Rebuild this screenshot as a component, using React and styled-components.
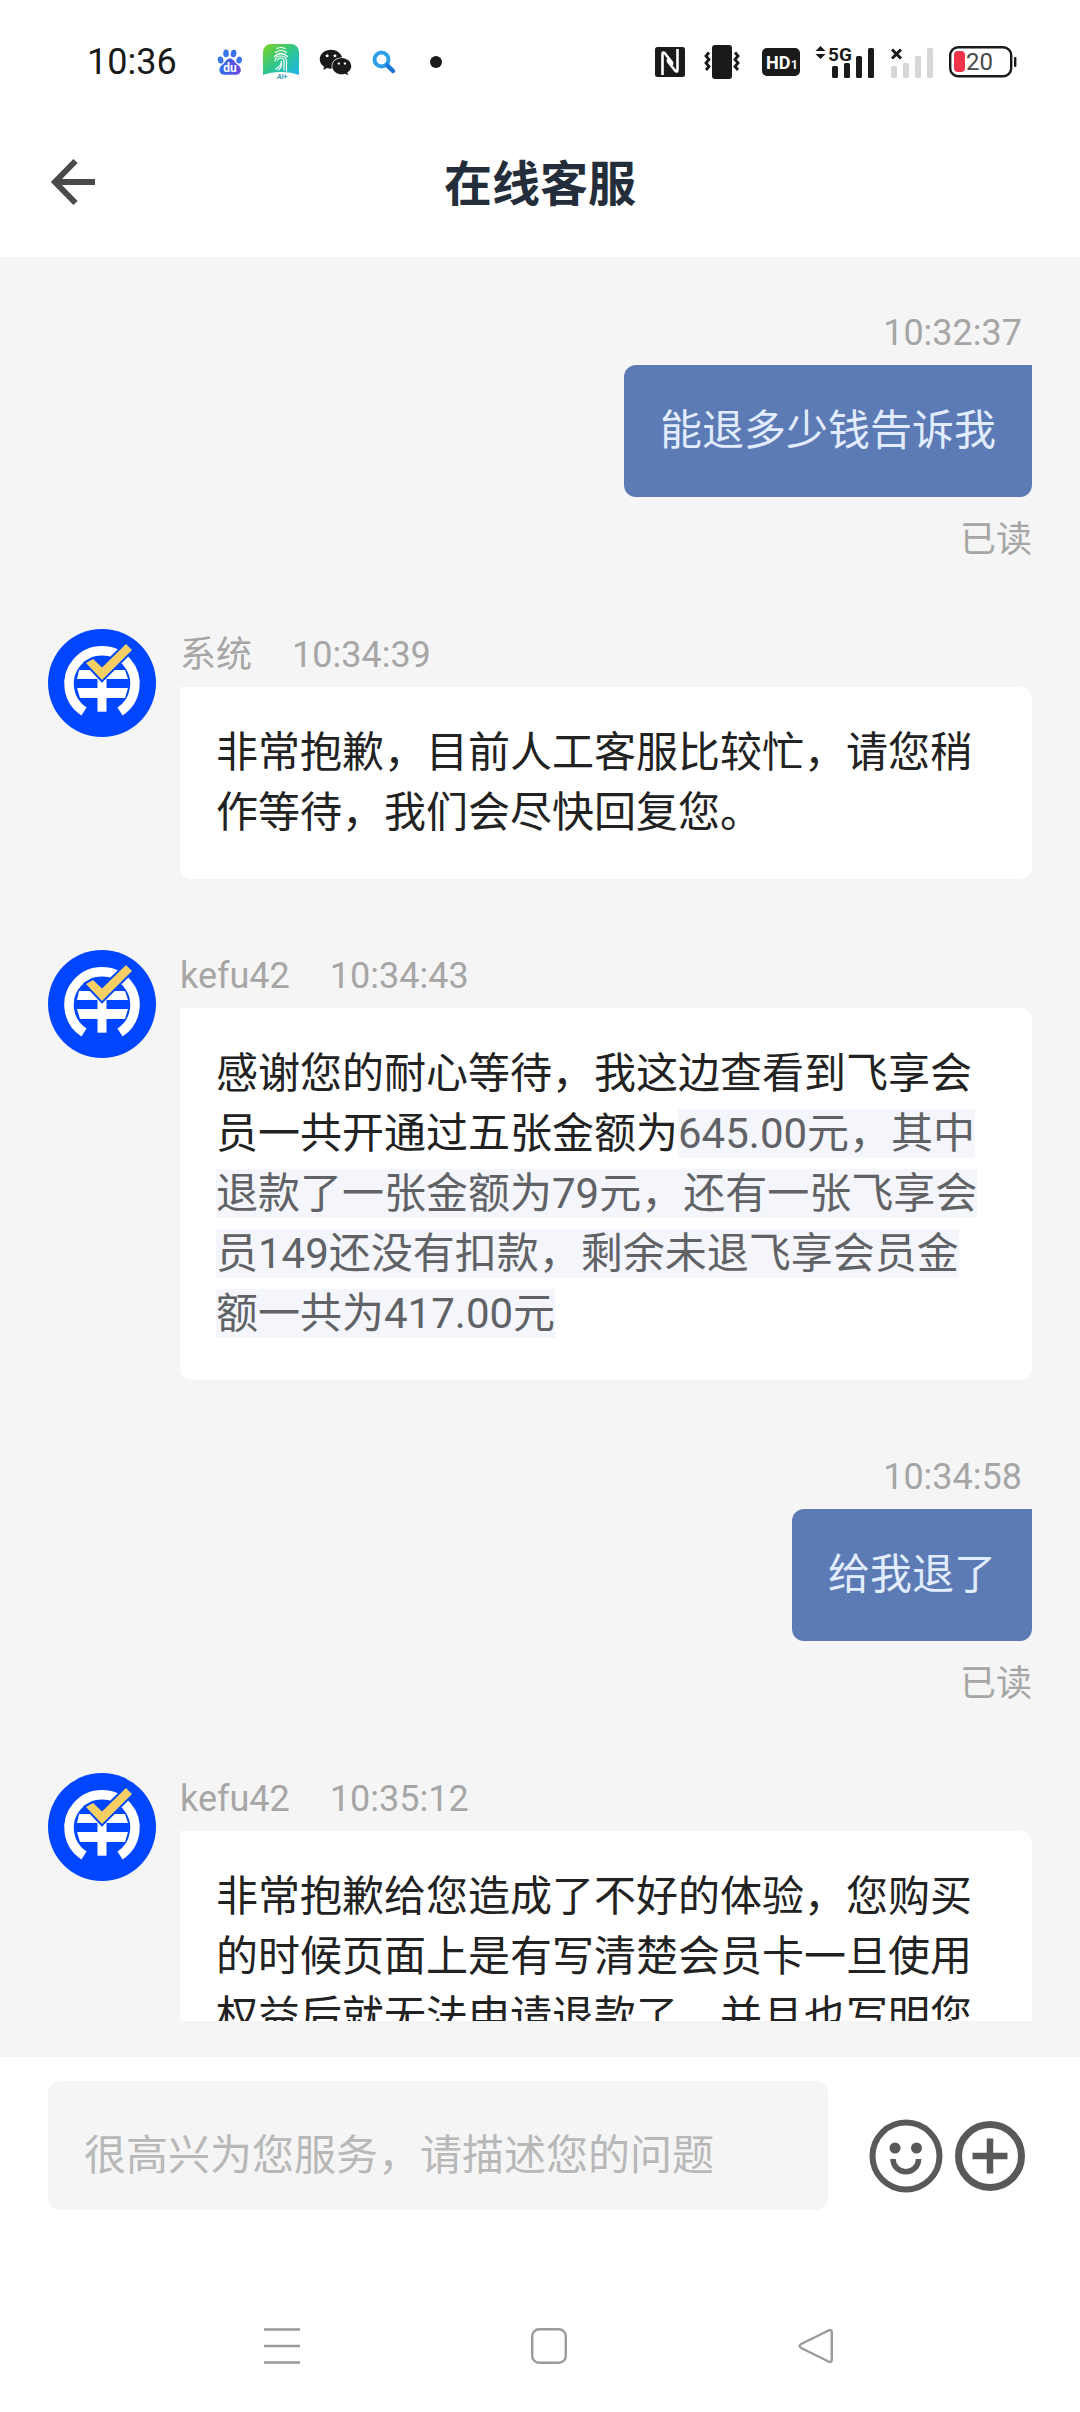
import React from "react";
import styled, { createGlobalStyle } from "styled-components";
import { FaWeixin } from "react-icons/fa";

const GlobalStyle = createGlobalStyle`
  * {
    box-sizing: border-box;
  }
  body {
    margin: 0;
    background: #fff;
    font-family: Roboto, "Noto Sans CJK SC", sans-serif;
  }
  button {
    display: flex;
    padding: 0;
    border: 0;
    background: none;
    cursor: pointer;
  }
  svg {
    display: block;
    flex: none;
    overflow: visible;
  }
`;

const Page = styled.div`
  height: 100vh;
  display: flex;
  flex-direction: column;
  background: #fff;
`;

const StatusBar = styled.div`
  flex: none;
  height: 124px;
  padding: 0 63px 0 87px;
  display: flex;
  align-items: center;
  justify-content: space-between;
  color: #1a1a1a;
`;

const StatusGroup = styled.div`
  display: flex;
  align-items: center;
  gap: ${({ $gap }) => $gap}px;
`;

const Clock = styled.span`
  margin-right: 20px;
  font-size: 36px;
  line-height: 40px;
`;

const Dot = styled.span`
  width: 12px;
  height: 12px;
  margin-left: 14px;
  border-radius: 50%;
  background: #1a1a1a;
`;

const AppBar = styled.header`
  flex: none;
  height: 133px;
  padding: 0 48px 17px;
  display: grid;
  grid-template-columns: 48px 1fr 48px;
  align-items: center;
`;

const Title = styled.h1`
  margin: 0;
  padding-top: 6px;
  font-size: 48px;
  line-height: 64px;
  font-weight: 700;
  text-align: center;
  color: #232e3a;
`;

const Chat = styled.main`
  flex: 1;
  min-height: 0;
  padding-bottom: 36px;
  display: flex;
  background: #f5f5f5;
`;

const MessageList = styled.div`
  flex: 1;
  padding: 50px 48px 0;
  display: flex;
  flex-direction: column;
  gap: 71px;
  overflow-y: auto;
  scrollbar-width: none;
`;

const Row = styled.article`
  display: flex;
  align-items: flex-start;
  justify-content: ${({ $mine }) => ($mine ? "flex-end" : "flex-start")};
  gap: 24px;
`;

const Column = styled.div`
  min-width: 0;
  display: flex;
  flex-direction: column;
  align-items: ${({ $mine }) => ($mine ? "flex-end" : "flex-start")};
`;

const Meta = styled.div`
  margin-bottom: 6px;
  padding-right: ${({ $mine }) => ($mine ? 10 : 0)}px;
  display: flex;
  gap: 40px;
  font-size: 36px;
  line-height: 52px;
  color: #a6a6a6;
`;

const Bubble = styled.div`
  padding: 36px;
  border-radius: ${({ $mine }) => ($mine ? "12px 0 12px 12px" : "0 12px 12px 12px")};
  background: ${({ $mine }) => ($mine ? "#5c7ab3" : "#fff")};
  color: ${({ $mine }) => ($mine ? "#e1edff" : "#222")};
  font-size: 42px;
  line-height: 60px;
`;

const Quote = styled.span`
  background: #f5f6fb;
  color: #606266;
`;

const ReadMark = styled.div`
  padding-top: 25px;
  font-size: 36px;
  line-height: 36px;
  color: #a6a6a6;
`;

const Composer = styled.form`
  flex: none;
  padding: 24px 55px 0 48px;
  display: flex;
  gap: 41px;
`;

const MessageInput = styled.input`
  flex: 1;
  min-width: 0;
  height: 129px;
  padding: 20px 36px 0;
  border: 0;
  border-radius: 12px;
  outline: none;
  background: #f5f5f5;
  color: #222;
  font-family: inherit;
  font-size: 42px;
  &::placeholder {
    color: #b8b8b8;
    opacity: 1;
  }
`;

const Tools = styled.div`
  padding-top: 20px;
  display: flex;
  align-items: center;
  gap: 12px;
`;

const NavBar = styled.nav`
  flex: none;
  height: 202px;
  padding: 70px 131px 0 149px;
  display: grid;
  grid-template-columns: repeat(3, 1fr);
  align-items: center;
  justify-items: center;
`;

const BaiduIcon = () => (
  <svg width="26" height="26" viewBox="0 0 26 26">
    <defs>
      <linearGradient id="paw" x1="0" y1="0" x2="1" y2="0">
        <stop offset="0" stopColor="#2f6fe8" />
        <stop offset="1" stopColor="#6a48e0" />
      </linearGradient>
    </defs>
    <g fill="#3a74e6">
      <ellipse cx="3.6" cy="11" rx="2.8" ry="3.6" transform="rotate(-12 3.6 11)" />
      <ellipse cx="9" cy="4.4" rx="2.8" ry="3.8" />
      <ellipse cx="16.6" cy="4.6" rx="2.8" ry="3.8" transform="rotate(10 16.6 4.6)" />
      <ellipse cx="22.2" cy="11" rx="2.8" ry="3.4" transform="rotate(12 22.2 11)" />
    </g>
    <path
      d="M13 9.5c-3 0-4 2.6-6 4.8-2 2-4.6 3.4-4.6 6.6 0 3 2 4.8 5 4.8h11.4c3 0 5-1.8 5-4.8 0-3.2-2.8-4.6-4.8-6.6-2-2.200-3-4.800-6-4.800z"
      fill="url(#paw)"
    />
    <text x="13" y="23" fontSize="12" fontWeight="700" textAnchor="middle" fill="#fff">
      du
    </text>
  </svg>
);

const FingerprintIcon = () => (
  <svg width="36" height="36" viewBox="0 0 36 36">
    <defs>
      <linearGradient id="finger" x1="0" y1="0" x2="1" y2="1">
        <stop offset="0" stopColor="#7ed321" />
        <stop offset="0.5" stopColor="#2fc68c" />
        <stop offset="1" stopColor="#1cb5ee" />
      </linearGradient>
    </defs>
    <path
      d="M8 0h20a8 8 0 0 1 8 8v23c-5-2-11-3-18-3S5 29 0 31V8a8 8 0 0 1 8-8z"
      fill="url(#finger)"
    />
    <g fill="none" stroke="#fff" strokeWidth="1.2" strokeLinecap="round">
      <path d="M14 4.5q4-2 8 0" />
      <path d="M12.5 8.5q5.5-4 11 0" />
      <path d="M11.5 12.5q6.5-6 13 0" />
      <path d="M12 17q0-5 6-5 5.5 0 5.5 5.5V27" />
      <path d="M14.5 16q1-2 3.5-2 3 0 3 4v8" />
      <path d="M18.5 17q0 5-6 8" />
      <path d="M18.5 20v2q-1 2.5-3.5 4" />
    </g>
    <text x="19" y="35" fontSize="7" fontStyle="italic" fontWeight="700" textAnchor="middle" fill="#3a97b5">
      AI+
    </text>
  </svg>
);

const SearchIcon = () => (
  <svg width="24" height="24" viewBox="0 0 24 24" fill="none" strokeLinecap="round">
    <circle cx="9.5" cy="9.5" r="7" stroke="#2ba0e8" strokeWidth="4" />
    <path d="M15.5 15.5l5.5 5.5" stroke="#1b76d8" strokeWidth="4.5" />
  </svg>
);

const NfcIcon = () => (
  <svg width="30" height="30" viewBox="0 0 30 30">
    <rect width="30" height="30" rx="2.5" fill="#1a1a1a" />
    <path
      d="M7.5 28V7.5q0-3.500 2.500-1L17 15.500V18M22.500 2v20.500q0 3.500-2.500 1L13 14.500V12"
      fill="none"
      stroke="#fff"
      strokeWidth="2.6"
    />
  </svg>
);

const VibrateIcon = () => (
  <svg width="47" height="34" viewBox="-4 0 47 34">
    <rect x="8" y="0" width="20" height="34" rx="3" fill="#1a1a1a" />
    <g fill="none" stroke="#1a1a1a" strokeWidth="2.8">
      <path d="M5 7.5L2 11l3 3.500L2 18l3 3.500L2 25" />
      <path d="M31 7.5l3 3.500-3 3.500 3 3.500-3 3.500 3 3.500" />
    </g>
  </svg>
);

const HdIcon = () => (
  <svg width="38" height="28" viewBox="0 0 38 28">
    <rect width="38" height="28" rx="5" fill="#1a1a1a" />
    <text x="4" y="21" fontSize="18" fontWeight="700" fill="#fff">
      HD
    </text>
    <text x="29" y="21" fontSize="12" fontWeight="700" fill="#fff">
      1
    </text>
  </svg>
);

const SignalIcon = () => (
  <svg width="61" height="34" viewBox="0 0 61 34" fill="#1a1a1a">
    <path d="M5.5 1l5 5h-10zM5.500 14l5-5h-10z" />
    <text x="13" y="16" fontSize="19" fontWeight="700">
      5G
    </text>
    <rect x="17" y="21" width="6" height="12" rx="1.5" />
    <rect x="29" y="18" width="6" height="15" rx="1.5" />
    <rect x="41" y="11" width="6" height="22" rx="1.5" />
    <rect x="53" y="3" width="6" height="30" rx="1.5" />
  </svg>
);

const NoSignalIcon = () => (
  <svg width="43" height="34" viewBox="0 0 43 34">
    <path d="M1 4.5l9 9M10 4.500l-9 9" stroke="#1a1a1a" strokeWidth="3" />
    <g fill="#d6d6d6">
      <rect x="0" y="21" width="6" height="12" rx="1.5" />
      <rect x="12" y="18" width="6" height="15" rx="1.5" />
      <rect x="24" y="11" width="6" height="22" rx="1.5" />
      <rect x="36" y="3" width="6" height="30" rx="1.5" />
    </g>
  </svg>
);

const BatteryIcon = () => (
  <svg width="68" height="32" viewBox="0 0 68 32">
    <rect x="1.2" y="1.2" width="61" height="29" rx="8" fill="none" stroke="#1a1a1a" strokeWidth="2.4" />
    <rect x="65" y="11" width="2.4" height="10" rx="1" fill="#1a1a1a" />
    <rect x="5" y="5" width="11" height="21" rx="4" fill="#f0324b" />
    <text x="17" y="24" fontSize="24" fill="#4a4a4a">
      20
    </text>
  </svg>
);

const BackArrowIcon = () => (
  <svg width="48" height="48" viewBox="0 0 48 48" fill="none" stroke="#4a4a4a" strokeWidth="6">
    <path d="M27.5 3L7 24l20.500 21M7 24h40" />
  </svg>
);

const Avatar = () => (
  <svg width="108" height="108" viewBox="0 0 108 108" role="img" aria-label="客服头像">
    <circle cx="54" cy="54" r="54" fill="#0045ff" />
    <path d="M36 82.5A33 33 0 1 1 72 82.500" fill="none" stroke="#fff" strokeWidth="9.5" />
    <g fill="#fff">
      <path d="M31 41h46l3 9H29z" />
      <path d="M29 59h51l-3 10H32z" />
      <path d="M49.5 50h9v32.700h-9z" />
    </g>
    <path
      d="M38 34l7-4 9 8.500L78 15l6 6-30 30z"
      fill="#f5cf63"
      stroke="#0045ff"
      strokeWidth="4"
      paintOrder="stroke"
    />
  </svg>
);

const SmileIcon = () => (
  <svg width="74" height="74" viewBox="0 0 74 74">
    <circle cx="37" cy="37" r="33.5" fill="none" stroke="#595959" strokeWidth="6" />
    <circle cx="26" cy="29" r="5.5" fill="#595959" />
    <circle cx="47.5" cy="29" r="5.5" fill="#595959" />
    <path d="M24 40a12.8 12.800 0 0 0 25.600 0" fill="none" stroke="#595959" strokeWidth="5.5" />
  </svg>
);

const PlusIcon = () => (
  <svg width="70" height="70" viewBox="0 0 70 70" fill="none" stroke="#595959">
    <circle cx="35" cy="35" r="31.5" strokeWidth="7" />
    <path d="M35 17.5v35M17.500 35h35" strokeWidth="6.5" />
  </svg>
);

const RecentsIcon = () => (
  <svg width="36" height="36" viewBox="0 0 36 36" stroke="#9a9a9a" strokeWidth="2.6">
    <path d="M0 1.5h36M0 18h36M0 34.500h36" />
  </svg>
);

const HomeIcon = () => (
  <svg width="36" height="36" viewBox="0 0 36 36">
    <rect x="1.2" y="1.2" width="33.6" height="33.6" rx="7" fill="none" stroke="#9a9a9a" strokeWidth="2.4" />
  </svg>
);

const NavBackIcon = () => (
  <svg width="36" height="36" viewBox="0 0 36 36">
    <path
      d="M30.5 2.500L3.200 16q-3.200 2 0 4L30.500 33.500q3.300 1.500 3.300-2V4.500q0-3.500-3.300-2z"
      fill="none"
      stroke="#9a9a9a"
      strokeWidth="2.4"
    />
  </svg>
);

const messages = [
  { id: 1, mine: true, time: "10:32:37", text: "能退多少钱告诉我" },
  {
    id: 2,
    name: "系统",
    time: "10:34:39",
    text: "非常抱歉，目前人工客服比较忙，请您稍作等待，我们会尽快回复您。",
  },
  {
    id: 3,
    name: "kefu42",
    time: "10:34:43",
    text: "感谢您的耐心等待，我这边查看到飞享会员一共开通过五张金额为",
    quote: "645.00元，其中退款了一张金额为79元，还有一张飞享会员149还没有扣款，剩余未退飞享会员金额一共为417.00元",
  },
  { id: 4, mine: true, time: "10:34:58", text: "给我退了" },
  {
    id: 5,
    name: "kefu42",
    time: "10:35:12",
    text: "非常抱歉给您造成了不好的体验，您购买的时候页面上是有写清楚会员卡一旦使用权益后就无法申请退款了，并且也写明您",
  },
];

const Message = ({ message }) => {
  const { mine, name, time, text, quote } = message;
  return (
    <Row $mine={mine}>
      {!mine && <Avatar />}
      <Column $mine={mine}>
        <Meta $mine={mine}>
          {name && <span>{name}</span>}
          <time>{time}</time>
        </Meta>
        <Bubble $mine={mine}>
          {text}
          {quote && <Quote>{quote}</Quote>}
        </Bubble>
        {mine && <ReadMark>已读</ReadMark>}
      </Column>
    </Row>
  );
};

const App = () => {
  return (
    <Page lang="zh-CN">
      <GlobalStyle />
      <StatusBar>
        <StatusGroup $gap={20}>
          <Clock>10:36</Clock>
          <BaiduIcon />
          <FingerprintIcon />
          <FaWeixin size={33} />
          <SearchIcon />
          <Dot />
        </StatusGroup>
        <StatusGroup $gap={15}>
          <NfcIcon />
          <VibrateIcon />
          <HdIcon />
          <SignalIcon />
          <NoSignalIcon />
          <BatteryIcon />
        </StatusGroup>
      </StatusBar>
      <AppBar>
        <button type="button" aria-label="返回">
          <BackArrowIcon />
        </button>
        <Title>在线客服</Title>
      </AppBar>
      <Chat>
        <MessageList>
          {messages.map((message) => (
            <Message key={message.id} message={message} />
          ))}
        </MessageList>
      </Chat>
      <Composer onSubmit={(e) => e.preventDefault()}>
        <MessageInput
          type="text"
          aria-label="输入消息"
          placeholder="很高兴为您服务，请描述您的问题"
        />
        <Tools>
          <button type="button" aria-label="表情">
            <SmileIcon />
          </button>
          <button type="button" aria-label="更多">
            <PlusIcon />
          </button>
        </Tools>
      </Composer>
      <NavBar>
        <button type="button" aria-label="最近任务">
          <RecentsIcon />
        </button>
        <button type="button" aria-label="主屏幕">
          <HomeIcon />
        </button>
        <button type="button" aria-label="后退">
          <NavBackIcon />
        </button>
      </NavBar>
    </Page>
  );
};

export default App;
